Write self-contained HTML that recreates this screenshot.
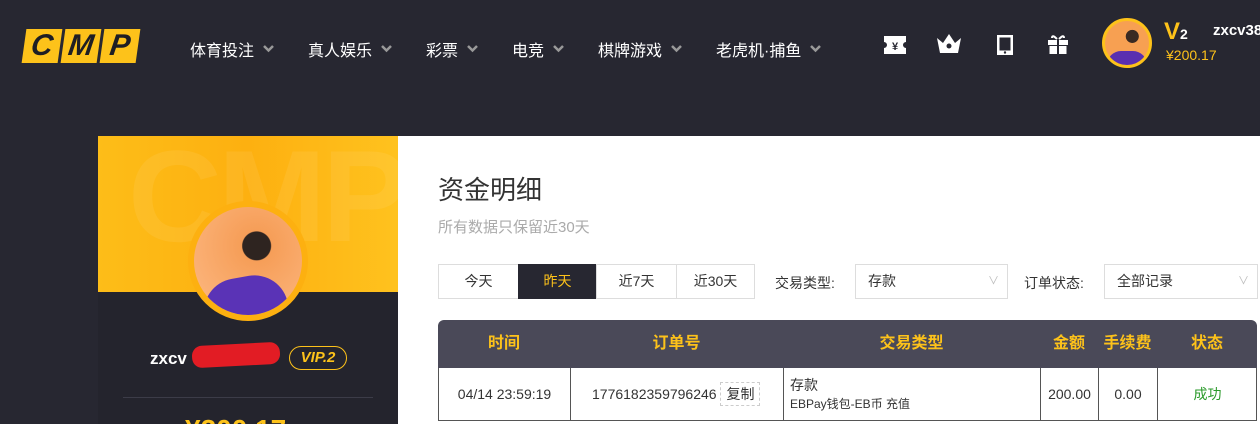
<!DOCTYPE html>
<html><head><meta charset="utf-8"><style>
*{margin:0;padding:0;box-sizing:border-box}
html,body{width:1260px;height:424px;overflow:hidden}
body{background:#272731;font-family:"Liberation Sans","Noto Sans CJK SC",sans-serif;position:relative}
.a{position:absolute}
.nav{color:#fff;font-size:16px;top:37px;display:flex;align-items:center}
.nav svg{margin-left:9px}
.logo{top:29px;height:34px;width:36px;background:#fdc21a;transform:skewX(-8deg);color:#1e1e24;font:italic 900 30px "Liberation Sans",sans-serif;text-align:center;line-height:34px}
.btn{top:264px;height:35px;border:1px solid #ddd;font-size:14px;color:#333;text-align:center;line-height:33px;background:#fff}
.sel{top:264px;height:35px;border:1px solid #ddd;font-size:14px;color:#333;line-height:33px;padding-left:12px;background:#fff}
.sel i{position:absolute;right:8px;color:#bbb;font-style:normal;font-size:11px}
.th{top:320px;height:48px;line-height:48px;color:#fdc21a;font-weight:bold;font-size:16px;text-align:center}
.td{top:368px;height:53px;line-height:53px;border-left:1px solid #555;font-size:14px;color:#333;text-align:center}
</style></head><body>
<div class="a logo" style="left:24px">C</div>
<div class="a logo" style="left:63px">M</div>
<div class="a logo" style="left:102px">P</div>
<div class="a nav" style="left:190px">体育投注<svg width="11" height="8"><path d="M1 1l4.5 4.5L10 1" stroke="#999" stroke-width="2.5" fill="none"/></svg></div>
<div class="a nav" style="left:308px">真人娱乐<svg width="11" height="8"><path d="M1 1l4.5 4.5L10 1" stroke="#999" stroke-width="2.5" fill="none"/></svg></div>
<div class="a nav" style="left:426px">彩票<svg width="11" height="8"><path d="M1 1l4.5 4.5L10 1" stroke="#999" stroke-width="2.5" fill="none"/></svg></div>
<div class="a nav" style="left:512px">电竞<svg width="11" height="8"><path d="M1 1l4.5 4.5L10 1" stroke="#999" stroke-width="2.5" fill="none"/></svg></div>
<div class="a nav" style="left:598px">棋牌游戏<svg width="11" height="8"><path d="M1 1l4.5 4.5L10 1" stroke="#999" stroke-width="2.5" fill="none"/></svg></div>
<div class="a nav" style="left:716px">老虎机·捕鱼<svg width="11" height="8"><path d="M1 1l4.5 4.5L10 1" stroke="#999" stroke-width="2.5" fill="none"/></svg></div>
<svg class="a" style="left:883px;top:35px" width="24" height="20"><path d="M1 1h22v6a3 3 0 0 0 0 6v6H1v-6a3 3 0 0 0 0-6z" fill="#fff"/><text x="12" y="15" font-size="11" text-anchor="middle" fill="#272731" font-weight="bold">¥</text></svg>
<svg class="a" style="left:936px;top:32px" width="26" height="22"><path d="M1 6l6 5 6-9 6 9 6-5-3 15H4z" fill="#fff"/><circle cx="13" cy="14" r="2.5" fill="#272731"/></svg>
<svg class="a" style="left:996px;top:34px" width="18" height="22"><rect x="1" y="1" width="16" height="20" fill="#fff"/><rect x="3.5" y="3.5" width="11" height="13" fill="#272731"/><circle cx="9" cy="18.5" r="1.2" fill="#272731"/></svg>
<svg class="a" style="left:1047px;top:33px" width="22" height="22"><rect x="1" y="7" width="20" height="5" fill="#fff"/><rect x="2.5" y="13" width="17" height="8" fill="#fff"/><path d="M5 5q0-4 5 1M17 5q0-4-5 1" stroke="#fff" stroke-width="2" fill="none"/><rect x="10" y="7" width="2" height="14" fill="#272731"/></svg>
<div class="a" style="left:1102px;top:18px;width:50px;height:50px;border-radius:50%;border:3px solid #fdc21a;background:radial-gradient(circle at 62% 35%,#3a2a22 0 16%,#f7a052 17%);overflow:hidden"><div style="position:absolute;left:2px;top:30px;width:40px;height:20px;background:#5a2fb0;border-radius:14px 14px 0 0"></div></div>
<div class="a" style="left:1164px;top:18px;color:#fdc21a;font:bold 24px 'Liberation Sans'">V<span style="color:#fff;font-size:14px">2</span></div>
<div class="a" style="left:1213px;top:22px;color:#fff;font-weight:bold;font-size:15px">zxcv38</div>
<div class="a" style="left:1166px;top:47px;color:#fdc21a;font-size:14px">¥200.17</div>
<div class="a" style="left:98px;top:136px;width:300px;height:288px;background:#24242d"></div>
<div class="a" style="left:98px;top:136px;width:300px;height:156px;background:linear-gradient(90deg,#fdbd18,#fdb010 50%,#ffc21e);overflow:hidden"><div style="position:absolute;left:30px;top:-15px;font:bold 130px 'Liberation Sans';color:rgba(255,255,255,.07);letter-spacing:-4px">CMP</div></div>
<div class="a" style="left:188px;top:201px;width:120px;height:120px;border-radius:50%;border:6px solid #fdb010;background:radial-gradient(circle at 58% 36%,#2e2420 0 15%,#f69e58 16%,#fbb278 75%);overflow:hidden"><div style="position:absolute;left:8px;top:70px;width:85px;height:50px;background:#5a33b6;border-radius:34px 34px 0 0;transform:rotate(-10deg)"></div></div>
<div class="a" style="left:150px;top:349px;color:#fff;font-weight:bold;font-size:17px">zxcv</div>
<div class="a" style="left:192px;top:344px;width:88px;height:22px;background:#e21c24;border-radius:10px;transform:rotate(-3deg)"></div>
<div class="a" style="left:289px;top:346px;width:58px;height:24px;border:1px solid #fdc21a;border-radius:12px;color:#fdc21a;font:italic bold 15px 'Liberation Sans';text-align:center;line-height:22px">VIP.2</div>
<div class="a" style="left:123px;top:397px;width:250px;height:1px;background:#3c3c48"></div>
<div class="a" style="left:185px;top:414px;color:#fdc21a;font-size:28px;font-weight:bold">¥200.17</div>
<div class="a" style="left:398px;top:136px;width:862px;height:288px;background:#fff"></div>
<div class="a" style="left:438px;top:170px;font-size:26px;color:#333">资金明细</div>
<div class="a" style="left:438px;top:216px;font-size:15px;color:#aaa">所有数据只保留近30天</div>
<div class="a btn" style="left:438px;width:81px">今天</div>
<div class="a btn" style="left:518px;width:79px;background:#272731;color:#fdc21a;border-color:#272731">昨天</div>
<div class="a btn" style="left:596px;width:81px">近7天</div>
<div class="a btn" style="left:676px;width:79px">近30天</div>
<div class="a" style="left:775px;top:273px;font-size:14px;color:#333">交易类型:</div>
<div class="a sel" style="left:855px;width:153px">存款<i>∨</i></div>
<div class="a" style="left:1024px;top:273px;font-size:14px;color:#333">订单状态:</div>
<div class="a sel" style="left:1104px;width:154px">全部记录<i>∨</i></div>
<div class="a" style="left:438px;top:320px;width:819px;height:48px;background:#4a4958;border-radius:6px 6px 0 0"></div>
<div class="a th" style="left:438px;width:132px">时间</div>
<div class="a th" style="left:570px;width:213px">订单号</div>
<div class="a th" style="left:783px;width:257px">交易类型</div>
<div class="a th" style="left:1040px;width:58px">金额</div>
<div class="a th" style="left:1098px;width:59px">手续费</div>
<div class="a th" style="left:1157px;width:100px">状态</div>
<div class="a" style="left:438px;top:368px;width:819px;height:53px;border:1px solid #555;border-top:none"></div>
<div class="a td" style="left:438px;width:132px">04/14 23:59:19</div>
<div class="a td" style="left:570px;width:213px;text-align:left;padding-left:21px">1776182359796246 <span style="border:1px dashed #ccc;padding:3px 5px">复制</span></div>
<div class="a td" style="left:783px;width:257px;text-align:left;padding-left:6px;line-height:18px;padding-top:8px">存款<br><span style="font-size:12px">EBPay钱包-EB币 充值</span></div>
<div class="a td" style="left:1040px;width:58px">200.00</div>
<div class="a td" style="left:1098px;width:59px">0.00</div>
<div class="a td" style="left:1157px;width:100px;color:#2a9a2a">成功</div>
</body></html>
